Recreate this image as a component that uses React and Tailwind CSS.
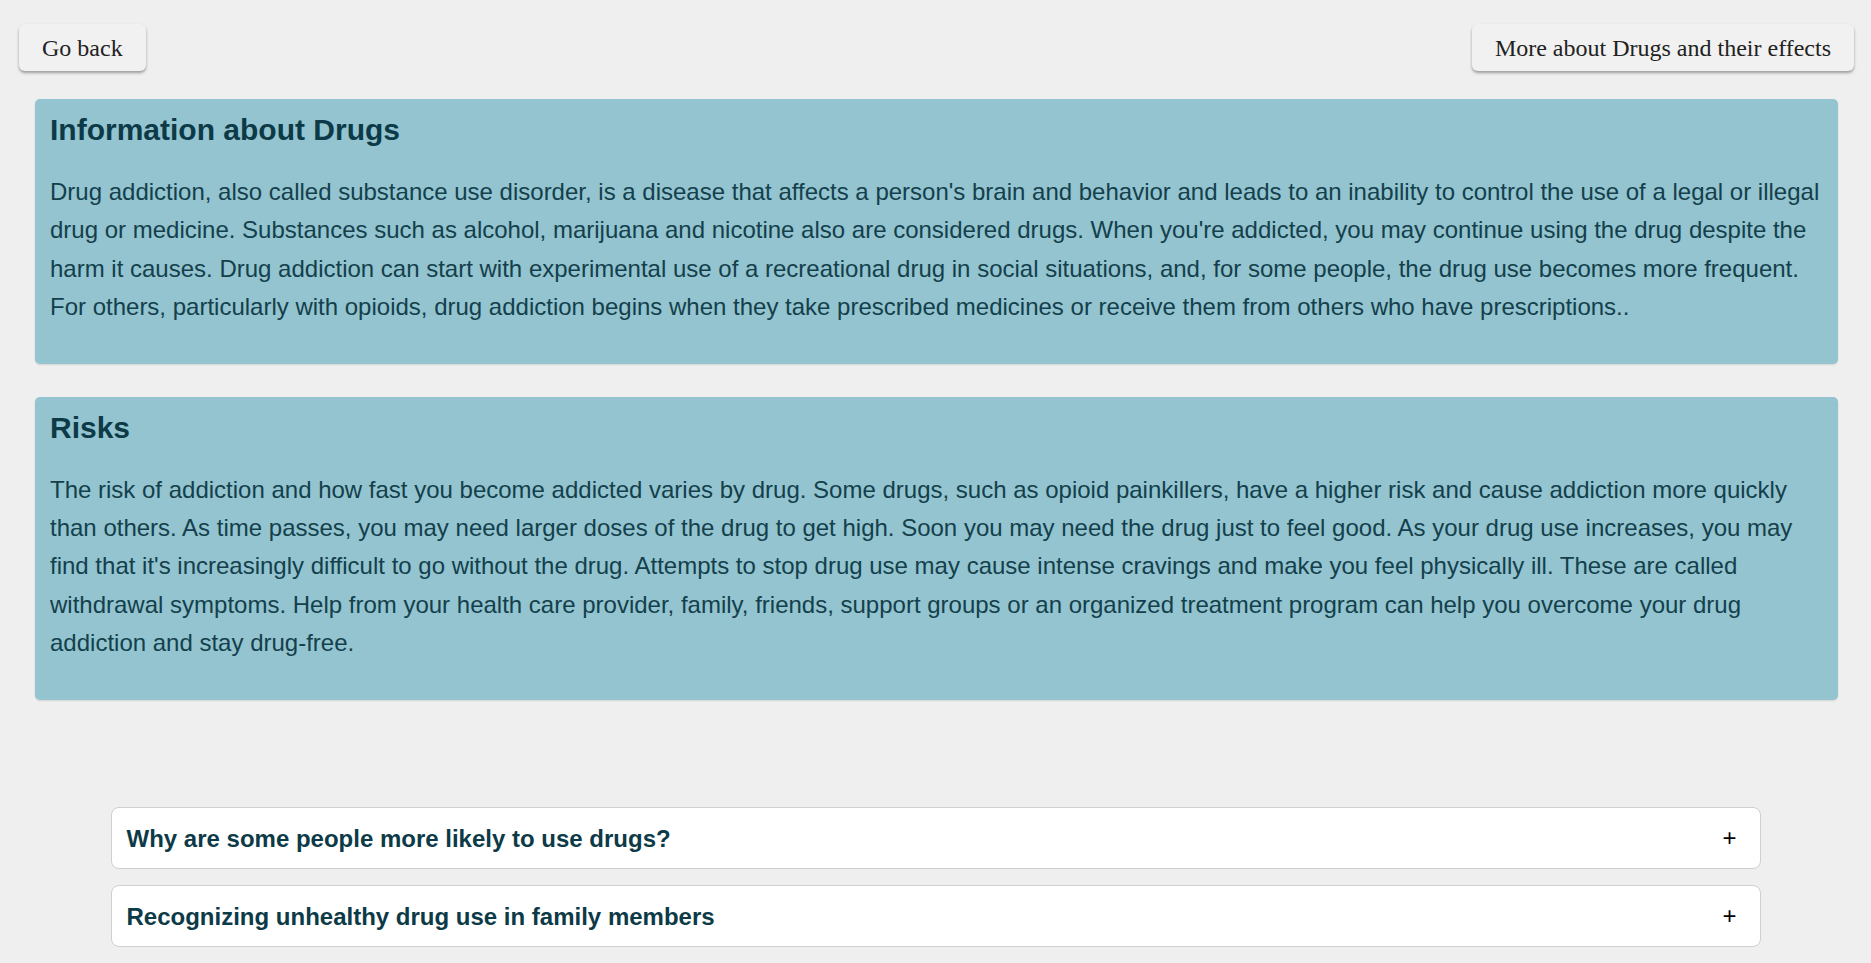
import React from 'react';

const sections = [
  {
    title: 'Information about Drugs',
    body: "Drug addiction, also called substance use disorder, is a disease that affects a person's brain and behavior and leads to an inability to control the use of a legal or illegal drug or medicine. Substances such as alcohol, marijuana and nicotine also are considered drugs. When you're addicted, you may continue using the drug despite the harm it causes. Drug addiction can start with experimental use of a recreational drug in social situations, and, for some people, the drug use becomes more frequent. For others, particularly with opioids, drug addiction begins when they take prescribed medicines or receive them from others who have prescriptions..",
  },
  {
    title: 'Risks',
    body: "The risk of addiction and how fast you become addicted varies by drug. Some drugs, such as opioid painkillers, have a higher risk and cause addiction more quickly than others. As time passes, you may need larger doses of the drug to get high. Soon you may need the drug just to feel good. As your drug use increases, you may find that it's increasingly difficult to go without the drug. Attempts to stop drug use may cause intense cravings and make you feel physically ill. These are called withdrawal symptoms. Help from your health care provider, family, friends, support groups or an organized treatment program can help you overcome your drug addiction and stay drug-free.",
  },
];

const questions = [
  'Why are some people more likely to use drugs?',
  'Recognizing unhealthy drug use in family members',
];

const NavButton = ({ children }) => (
  <button className="h-[47px] px-[23px] rounded-[6px] bg-[#f1f1f1] text-[#222] text-[24px] font-['Liberation_Serif',serif] shadow-[0_2px_3px_rgba(0,0,0,0.35)]">
    {children}
  </button>
);

export default function App() {
  return (
    <div className="min-h-screen bg-[#efefef] pb-[15px] font-['Liberation_Sans',Arial,sans-serif]">
      {/* Top buttons */}
      <div className="flex justify-between pl-[19px] pr-[17px] pt-[24px]">
        <NavButton>Go back</NavButton>
        <NavButton>More about Drugs and their effects</NavButton>
      </div>

      {/* Info cards */}
      <div className="ml-[35px] mr-[33px] mt-[28px] flex flex-col gap-[33px]">
        {sections.map((s) => (
          <div
            key={s.title}
            className="bg-[#93c4cf] rounded-[5px] px-[15px] pt-[14px] pb-[15px] shadow-[0_1px_2px_rgba(0,0,0,0.12)]"
          >
            <h2 className="text-[30px] leading-[34px] font-bold text-[#0d3a47]">{s.title}</h2>
            <p className="mt-[26px] mb-[22px] text-[24px] leading-[38.4px] text-[#14404c]">{s.body}</p>
          </div>
        ))}
      </div>

      {/* Accordion */}
      <div className="mt-[107px] mx-auto w-[1650px] flex flex-col gap-[16px]">
        {questions.map((q) => (
          <div
            key={q}
            className="h-[62px] flex items-center justify-between bg-white border border-[#cfcfcf] rounded-[8px] pl-[15px] pr-[23px]"
          >
            <span className="text-[24px] font-bold text-[#0d3a47] translate-y-[1px]">{q}</span>
            <span className="text-[24px] text-black leading-none">+</span>
          </div>
        ))}
      </div>
    </div>
  );
}
